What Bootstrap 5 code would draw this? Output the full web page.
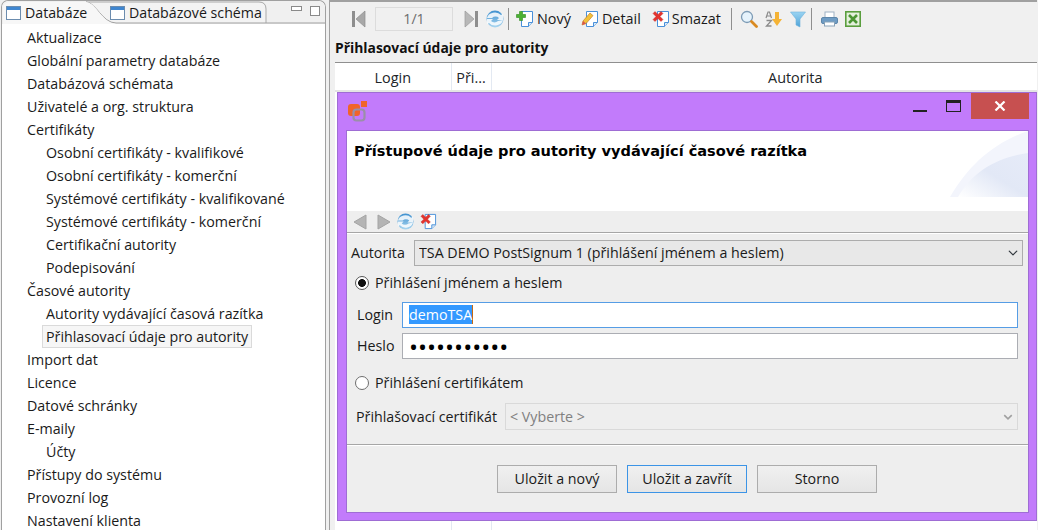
<!DOCTYPE html>
<html lang="cs">
<head>
<meta charset="UTF-8" />
<title>Přihlašovací údaje pro autority</title>
<link href="https://cdn.jsdelivr.net/npm/bootstrap@5.3.2/dist/css/bootstrap.min.css" rel="stylesheet" />
<style>
html, body { height: 100%; margin: 0; overflow: hidden; }
body { background: #f0f0f0; color: #1a1a1a; font-family: "Open Sans", "Liberation Sans", sans-serif; font-size: 14.25px; width: 1038px; height: 530px; }
.left-pane { width: 325px; height: 530px; margin: 0 3px 0 1px; border: 1px solid #a0a0a0; border-bottom: 0; border-radius: 7px 7px 0 0; background: #fff; flex: none; }
.tab-strip { height: 23px; background: #f0f0f0; border-radius: 7px 7px 0 0; position: relative; }
.tab-shape { position: absolute; left: 0; top: 0; }
.pane-tab { position: relative; height: 23px; gap: 3px; font-size: 14.2px; white-space: nowrap; }
.pane-tab-a { margin-left: 4px; width: 104px; }
.pane-tab-b { width: 158px; }
.pane-btns { position: absolute; right: 4px; top: 5px; gap: 8px; }
.tree-list { margin: 2px 0 0 0; padding: 0; list-style: none; }
.tree-list li { height: 23px; line-height: 23px; padding-left: 25px; white-space: nowrap; }
.tree-list li.sub { padding-left: 44px; }
.tree-sel { display: inline-block; margin-left: -4px; padding: 0 3px; height: 23px; line-height: 21px; background: #f6f6f6; border: 1px solid #dadada; }
.right-pane { width: 708px; height: 530px; border-left: 1px solid #a0a0a0; border-top: 2px solid #a0a0a0; position: relative; flex: none; overflow: hidden; }
.tool-row { height: 34px; padding-left: 22px; }
.tool-row svg { flex: none; display: block; }
.pager-box { width: 78px; height: 24px; border: 1px solid #dcdcdc; background: #f0f0f0; color: #6d6d6d; text-align: center; line-height: 22px; }
.tool-sep { width: 1px; height: 22px; background: #8f8f8f; }
.tool-txt { font-size: 14.4px; }
.g2 { margin-left: 2px; } .g3 { margin-left: 3px; } .g4 { margin-left: 4px; } .g5 { margin-left: 5px; }
.g7 { margin-left: 7px; } .g8 { margin-left: 8px; } .g9 { margin-left: 9px; } .g10 { margin-left: 10px; } .g11 { margin-left: 11px; }
.sec-title { font-weight: 700; font-size: 13.85px; height: 26px; line-height: 24px; padding-left: 5px; color: #111; }
.grid-wrap { margin-left: 5px; border-top: 1px solid #8f8f8f; background: #fff; height: 470px; overflow: hidden; }
.grid-table { table-layout: fixed; width: 765px; height: 469px; margin: 0; }
.grid-table th { font-weight: 400; font-size: 14.4px; height: 28px; padding: 2px 0 0; text-align: center; vertical-align: middle; border-bottom: 2px solid #e4e4e4; border-right: 1px solid #e3e9f2; }
.grid-table td { padding: 0; border-right: 1px solid #e3e9f2; border-bottom: 0; }
.dlg-window { position: absolute; left: 7px; top: 90px; width: 700px; height: 429px; background: #c27bfb; border: 1px solid #9f6dd4; }
.dlg-title { height: 37px; position: relative; }
.dlg-logo { position: absolute; left: 9px; top: 8px; }
.win-min { position: absolute; left: 575px; top: 17px; width: 14px; height: 2px; background: #222; }
.win-max { position: absolute; left: 608px; top: 7px; width: 15px; height: 12px; border: 1px solid #222; border-top-width: 3px; }
.win-close { position: absolute; left: 633px; top: 0; width: 58px; height: 26px; background: #c75050; }
.dlg-client { margin-left: 8px; width: 683px; height: 383px; background: #eeeeee; border: 1px solid #9f6dd4; }
.dlg-head { height: 80px; background: #fff; position: relative; padding: 9px 0 0 7px; font-family: "DejaVu Sans", sans-serif; font-weight: 700; font-size: 14.55px; color: #000; white-space: nowrap; }
.dlg-curve { position: absolute; right: 0; top: 0; }
.dlg-tools { height: 22px; gap: 6px; padding-left: 6px; border-bottom: 1px solid #a6a6a6; box-shadow: 0 1px 0 #fff; }
.lbl-row { height: 26px; }
.row-a { margin: 7px 5px 0 4px; }
.row-b { margin: 7px 10px 0 9px; }
.row-c { margin: 5px 10px 0 9px; }
.row-d { margin: 8px 10px 0 9px; height: 27px; }
.lbl-a { width: 63px; flex: none; }
.lbl-b { width: 46px; flex: none; padding-left: 1px; }
.lbl-c { width: 149px; flex: none; }
.dlg-select { height: 100%; padding: 0 24px 0 4px; font-size: 14.25px; color: #1a1a1a; background-color: #e8e8e8; background-position: right 3px center; background-size: 12px 10px; border: 1px solid #acacac; border-radius: 0; }
.dlg-select:disabled { background-color: #eeeeee; color: #808080; border-color: #d9d9d9; background-image: url("data:image/svg+xml,%3csvg xmlns='http://www.w3.org/2000/svg' viewBox='0 0 16 16'%3e%3cpath fill='none' stroke='%23a0a0a0' stroke-width='2.500' d='m2 5 6 6 6-6'/%3e%3c/svg%3e"); }
.dlg-input { height: 26px; padding: 0 6px; font-size: 14.25px; border: 1px solid #abadb3; border-radius: 0; line-height: 24px; color: #000; }
.dlg-input-on { border-color: #569de5; }
.dlg-pass { font-size: 24px; }
.txt-picked { background: #3399ff; color: #fff; border-right: 1px solid #c86a10; }
.dlg-radio { gap: 6px; height: 22px; margin-left: 8px; }
.radio-a { margin-top: 5px; }
.radio-b { margin-top: 12px; }
.dlg-radio .form-check-input { width: 14px; height: 14px; margin: 0; flex: none; background-color: #fff; border: 1px solid #6e6e6e; }
.dlg-radio .form-check-input:checked { background-color: #fff; background-image: radial-gradient(circle, #111 0 3.6px, transparent 4.2px); border-color: #555; }
.dlg-foot { border-top: 1px solid #a6a6a6; box-shadow: inset 0 1px 0 #fff; gap: 10px; margin-top: 14px; padding: 20px 0 0 150px; }
.dlg-btn { width: 120px; height: 28px; padding: 0; font-size: 14.25px; color: #1a1a1a; border: 1px solid #acacac; border-radius: 0; background: linear-gradient(#f0f0f0, #e5e5e5); }
.dlg-btn-on { border-color: #3c94e6; }
</style>
</head>
<body class="d-flex">

<svg width="0" height="0" class="position-absolute">
  <defs>
    <linearGradient id="g-sync" x1="0" y1="0" x2="0" y2="1"><stop offset="0" stop-color="#3f90cf"/><stop offset="1" stop-color="#a9d6f0"/></linearGradient>
    <linearGradient id="g-fun" x1="0" y1="0" x2="0" y2="1"><stop offset="0" stop-color="#9ad4f2"/><stop offset="1" stop-color="#4fa3d8"/></linearGradient>
    <symbol id="i-pane" viewBox="0 0 16 16"><rect x=".5" y="1.500" width="14" height="13" fill="#fff" stroke="#6b8cae"/><rect x="1" y="2" width="13" height="3" fill="#3f86d0"/></symbol>
    <symbol id="i-first" viewBox="0 0 14 18"><rect x="0" y="1" width="3" height="16" fill="#8e8e8e"/><path d="M13 1v16L4 9z" fill="#a8a8a8" stroke="#8c8c8c" stroke-width=".7"/></symbol>
    <symbol id="i-last" viewBox="0 0 14 18"><rect x="11" y="1" width="3" height="16" fill="#8e8e8e"/><path d="M1 1v16l9-8z" fill="#b8b8b8" stroke="#9a9a9a" stroke-width=".7"/></symbol>
    <symbol id="i-back" viewBox="0 0 14 16"><path d="M13 1v14L1 8z" fill="#b4b4b4" stroke="#a4a4a4"/></symbol>
    <symbol id="i-next" viewBox="0 0 14 16"><path d="M1 1v14l12-7z" fill="#b4b4b4" stroke="#a4a4a4"/></symbol>
    <symbol id="i-sync" viewBox="0 0 18 18"><circle cx="9" cy="9" r="8.500" fill="url(#g-sync)"/><path d="M1 8a8 7 0 0 1 14-3l2-1v6h-6l2-2a4.500 4 0 0 0-7 0z" fill="#fff" opacity=".85"/><path d="M17 10a8 7 0 0 1-14 3l-2 1V9h6l-2 2a4.500 4 0 0 0 7 0z" fill="#fff" opacity=".85"/></symbol>
    <symbol id="i-doc" viewBox="0 0 18 18"><path d="M5.500 1.500h11v11l-4 4h-7z" fill="#fff" stroke="#4a90d9"/><path d="M12.500 16.500v-4h4" fill="#d6e8f8" stroke="#4a90d9"/></symbol>
    <symbol id="i-new" viewBox="0 0 18 18"><use href="#i-doc"/><path d="M3.500 1.500h3v3h3v3h-3v3h-3v-3h-3v-3h3z" fill="#4cb233" stroke="#2e8a1e" stroke-width=".6"/></symbol>
    <symbol id="i-edit" viewBox="0 0 18 18"><use href="#i-doc"/><path d="M1 15l1-4 7-8 3 2.600-7 8z" fill="#f2c13a" stroke="#c9821f" stroke-width=".7"/><path d="M1 15l1-4 3 2.600z" fill="#d9534f"/></symbol>
    <symbol id="i-del" viewBox="0 0 18 18"><use href="#i-doc"/><path d="M1 3.500l2-2 3 3 3-3 2 2-3 3 3 3-2 2-3-3-3 3-2-2 3-3z" fill="#e3342f" stroke="#bf2520" stroke-width=".4"/></symbol>
    <symbol id="i-find" viewBox="0 0 18 18"><circle cx="7" cy="7" r="5.500" fill="#e6f3fc" stroke="#7d9bb5" stroke-width="1.300"/><path d="M11.500 11.500l5 5" stroke="#d98a20" stroke-width="2.800" stroke-linecap="round"/></symbol>
    <symbol id="i-sort" viewBox="0 0 17 16"><path d="M10 1h4v7h3l-5 7-5-7h3z" fill="#f5b335"/><path d="M1 7l2-6h1.500l2 6M2 5h3.500" fill="none" stroke="#8a8a8a" stroke-width="1.200"/><path d="M1.500 9.500h5l-5 5.500h5" fill="none" stroke="#8a8a8a" stroke-width="1.300"/></symbol>
    <symbol id="i-funnel" viewBox="0 0 16 17"><path d="M.5 1h15L10 8v8l-4-2V8z" fill="url(#g-fun)" stroke="#6fb2dc" stroke-width=".6"/></symbol>
    <symbol id="i-print" viewBox="0 0 17 16"><rect x="4" y="1" width="9" height="6" fill="#fff" stroke="#9fb2c4"/><rect x=".5" y="6.500" width="16" height="6" rx="1.500" fill="#6f9cc4" stroke="#5e87ab"/><rect x="3.500" y="11" width="10" height="4" fill="#fff" stroke="#8aa3b8"/></symbol>
    <symbol id="i-xls" viewBox="0 0 16 16"><rect x=".8" y=".8" width="14.400" height="14.400" fill="#e4f0dc" stroke="#5a9e3e" stroke-width="1.600"/><path d="M4 4l8 8M12 4l-8 8" stroke="#4c9634" stroke-width="2.600"/></symbol>
  </defs>
</svg>

<aside class="left-pane">
  <div class="tab-strip d-flex align-items-center">
    <svg class="tab-shape" width="323" height="24" viewBox="0 0 323 24">
      <path d="M84 1H257Q264 1 264 8V22H114C100 22 94 1 84 1" fill="#f3f3f3"/>
      <path d="M84 1H257Q264 1 264 8V22" fill="none" stroke="#a9a9a9"/>
      <path d="M84 1C94 1 100 22 114 22H323" fill="none" stroke="#a0a0a0"/>
      <path d="M1 23V8Q1 1 8 1H84C94 1 100 22 114 23H1z" fill="#f7f7f7"/>
    </svg>
    <div class="pane-tab pane-tab-a d-flex align-items-center"><svg width="16" height="16"><use href="#i-pane"/></svg>Databáze</div>
    <div class="pane-tab pane-tab-b d-flex align-items-center"><svg width="16" height="16"><use href="#i-pane"/></svg>Databázové schéma</div>
    <div class="pane-btns d-flex">
      <svg width="11" height="6"><rect x=".5" y=".5" width="10" height="4" fill="#fff" stroke="#8a8a8a"/></svg>
      <svg width="11" height="11"><rect x=".5" y=".5" width="9" height="9" fill="#fff" stroke="#8a8a8a"/></svg>
    </div>
  </div>
  <ul class="tree-list">
    <li>Aktualizace</li>
    <li>Globální parametry databáze</li>
    <li>Databázová schémata</li>
    <li>Uživatelé a org. struktura</li>
    <li>Certifikáty</li>
    <li class="sub">Osobní certifikáty - kvalifikové</li>
    <li class="sub">Osobní certifikáty - komerční</li>
    <li class="sub">Systémové certifikáty - kvalifikované</li>
    <li class="sub">Systémové certifikáty - komerční</li>
    <li class="sub">Certifikační autority</li>
    <li class="sub">Podepisování</li>
    <li>Časové autority</li>
    <li class="sub">Autority vydávající časová razítka</li>
    <li class="sub"><span class="tree-sel">Přihlasovací údaje pro autority</span></li>
    <li>Import dat</li>
    <li>Licence</li>
    <li>Datové schránky</li>
    <li>E-maily</li>
    <li class="sub">Účty</li>
    <li>Přístupy do systému</li>
    <li>Provozní log</li>
    <li>Nastavení klienta</li>
  </ul>
</aside>

<main class="right-pane">
  <div class="tool-row d-flex align-items-center">
    <svg width="14" height="18"><use href="#i-first"/></svg>
    <div class="pager-box g9">1/1</div>
    <svg class="g11" width="14" height="18"><use href="#i-last"/></svg>
    <svg class="g8" width="18" height="18"><use href="#i-sync"/></svg>
    <div class="tool-sep g4"></div>
    <svg class="g7" width="18" height="18"><use href="#i-new"/></svg>
    <span class="tool-txt g3">Nový</span>
    <svg class="g10" width="18" height="18"><use href="#i-edit"/></svg>
    <span class="tool-txt g3">Detail</span>
    <svg class="g11" width="18" height="18"><use href="#i-del"/></svg>
    <span class="tool-txt g2">Smazat</span>
    <div class="tool-sep g10"></div>
    <svg class="g8" width="18" height="18"><use href="#i-find"/></svg>
    <svg class="g7" width="17" height="16"><use href="#i-sort"/></svg>
    <svg class="g8" width="16" height="17"><use href="#i-funnel"/></svg>
    <div class="tool-sep g5"></div>
    <svg class="g9" width="17" height="16"><use href="#i-print"/></svg>
    <svg class="g7" width="16" height="16"><use href="#i-xls"/></svg>
  </div>
  <div class="sec-title">Přihlasovací údaje pro autority</div>
  <div class="grid-wrap">
    <table class="table grid-table">
      <colgroup><col style="width:116px"><col style="width:40px"><col></colgroup>
      <thead><tr><th>Login</th><th>Při...</th><th>Autorita</th></tr></thead>
      <tbody><tr><td></td><td></td><td></td></tr></tbody>
    </table>
  </div>

  <section class="dlg-window">
    <div class="dlg-title">
      <svg class="dlg-logo" width="22" height="22" viewBox="0 0 22 22">
        <rect x="14" y="0" width="6" height="6" fill="#f0642a"/>
        <rect x="1" y="3" width="12" height="12" rx="3" fill="#f0642a"/>
        <rect x="6.500" y="8.500" width="11" height="11" rx="3" fill="none" stroke="#9a8fa8" stroke-width="2.200"/>
      </svg>
      <div class="win-min"></div>
      <div class="win-max"></div>
      <div class="win-close d-flex align-items-center justify-content-center">
        <svg width="12" height="10" viewBox="0 0 12 10"><path d="M1.500 .5l9 9M10.500 .5l-9 9" stroke="#fff" stroke-width="2.200"/></svg>
      </div>
    </div>
    <div class="dlg-client">
      <div class="dlg-head">Přístupové údaje pro autority vydávající časové razítka
        <svg class="dlg-curve" width="80" height="66" viewBox="0 0 80 66">
          <defs><linearGradient id="g1" x1="0" y1="1" x2="1" y2="0"><stop offset="0" stop-color="#fff"/><stop offset=".5" stop-color="#e2e8f6"/><stop offset="1" stop-color="#e6ebf8"/></linearGradient></defs>
          <path d="M2 66C20 35 45 12 80 0V66z" fill="#f3f5fc"/>
          <path d="M10 66C25 40 50 26 80 22V66z" fill="url(#g1)"/>
        </svg>
      </div>
      <div class="dlg-tools d-flex align-items-center">
        <svg width="14" height="16"><use href="#i-back"/></svg>
        <svg class="g4" width="14" height="16"><use href="#i-next"/></svg>
        <svg width="17" height="17"><use href="#i-sync"/></svg>
        <svg width="17" height="17"><use href="#i-del"/></svg>
      </div>
      <div class="lbl-row row-a d-flex align-items-center">
        <span class="lbl-a">Autorita</span>
        <select class="form-select dlg-select"><option>TSA DEMO PostSignum 1 (přihlášení jménem a heslem)</option></select>
      </div>
      <div class="form-check dlg-radio radio-a d-flex align-items-center ps-0">
        <input class="form-check-input" type="radio" name="prihl" id="r1" checked>
        <label for="r1">Přihlášení jménem a heslem</label>
      </div>
      <div class="lbl-row row-b d-flex align-items-center">
        <span class="lbl-b">Login</span>
        <div class="form-control dlg-input dlg-input-on"><span class="txt-picked">demoTSA</span></div>
      </div>
      <div class="lbl-row row-c d-flex align-items-center">
        <span class="lbl-b">Heslo</span>
        <input class="form-control dlg-input dlg-pass" type="password" value="heslo123456">
      </div>
      <div class="form-check dlg-radio radio-b d-flex align-items-center ps-0">
        <input class="form-check-input" type="radio" name="prihl" id="r2">
        <label for="r2">Přihlášení certifikátem</label>
      </div>
      <div class="lbl-row row-d d-flex align-items-center">
        <span class="lbl-c">Přihlašovací certifikát</span>
        <select class="form-select dlg-select" disabled><option>&lt; Vyberte &gt;</option></select>
      </div>
      <div class="dlg-foot d-flex">
        <button class="btn dlg-btn" type="button">Uložit a nový</button>
        <button class="btn dlg-btn dlg-btn-on" type="button">Uložit a zavřít</button>
        <button class="btn dlg-btn" type="button">Storno</button>
      </div>
    </div>
  </section>
</main>

<script src="https://cdn.jsdelivr.net/npm/bootstrap@5.3.2/dist/js/bootstrap.bundle.min.js"></script>
</body>
</html>
